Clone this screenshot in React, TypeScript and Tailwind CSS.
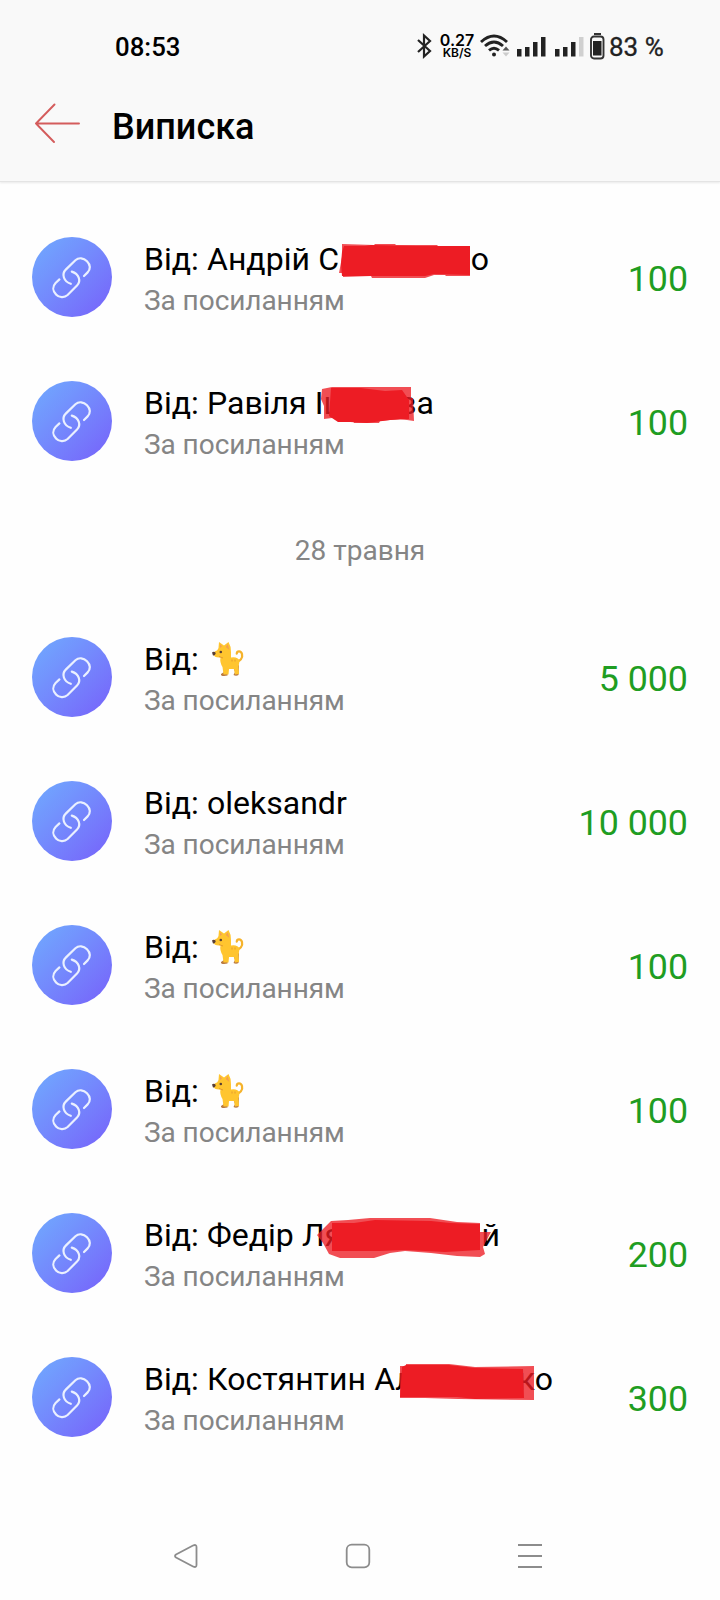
import React from "react";

type Redaction = { tail: string; width: string; edge: string; body: string };
type Entry = { name: string; amount: string; cat?: boolean; redaction?: Redaction };

const earlier: Entry[] = [
  {
    name: "Андрій С",
    amount: "100",
    redaction: {
      tail: "о",
      width: "w-[345px]",
      edge: "M197 4 L229 5 L230 4 L250 4 L251 5 L292 5 L293 6 L325 6 L325 36 L301 36 L300 35 L289 35 L280 38 L227 38 L226 36 L198 37 L198 33 L194 33 L197 17 Z",
      body: "M199 6 L220 6 L226 5 L271 6 L325 6 L325 35 L289 34 L280 36 L197 36 L196 24 L197 12 Z",
    },
  },
  {
    name: "Равіля Іц",
    amount: "100",
    redaction: {
      tail: "ва",
      width: "w-[290px]",
      edge: "M177 5 L187 3 L266 3 L266 14 L268 14 L269 37 L255 35 L235 37 L234 39 L209 39 L208 37 L195 33 L179 35 L179 22 L176 15 Z",
      body: "M186 4 L216 4 L240 7 L257 6 L264 16 L264 35 L245 36 L222 39 L205 38 L193 38 L184 32 Z",
    },
  },
];

const may28: Entry[] = [
  { name: "", amount: "5 000", cat: true },
  { name: "oleksandr", amount: "10 000" },
  { name: "", amount: "100", cat: true },
  { name: "", amount: "100", cat: true },
  {
    name: "Федір Ля",
    amount: "200",
    redaction: {
      tail: "ий",
      width: "w-[356px]",
      edge: "M172 19 L186 5 L203 4 L225 2 L285 2 L312 6 L335 7 L335 16 L346 16 L338 31 L340 38 L335 41 L312 40 L286 37 L260 35 L245 37 L229 42 L195 42 L184 38 L178 27 Z",
      body: "M187 7 L209 7 L230 4 L286 5 L305 7 L335 8 L335 34 L300 36 L260 34 L235 35 L187 35 Z",
    },
  },
  {
    name: "Костянтин Ал",
    amount: "300",
    redaction: {
      tail: "ко",
      width: "w-[409px]",
      edge: "M255 6 L261 6 L261 4 L304 4 L330 7 L389 6 L389 40 L313 39 L280 38 L255 38 Z",
      body: "M257 7 L261 5 L304 5 L330 8 L378 9 L379 38 L330 39 L312 37 L255 37 Z",
    },
  },
];

function LinkBadge() {
  return (
    <div className="mt-8 flex size-20 shrink-0 items-center justify-center rounded-full bg-linear-135 from-[#6fabfe] to-[#765ffa]">
      <svg className="size-20" viewBox="0 0 80 80" fill="none" stroke="#eaf0ff" strokeWidth="2.2" strokeLinecap="round">
        <path d="M38.8 46.8 C31.6 44.4 29.2 37.2 34 32.4 L43.4 23.2 C46.8 20.2 51.6 20.8 55 24.2 C58.6 27.8 58.8 32.2 55.4 35.6 L52 39" />
        <path d="M39.8 34.6 C46.8 36.8 49.5 43.8 45 48.6 L35.6 58 C32.4 61 27.2 60.8 24 57.4 C20.6 54 20.4 49.4 23.6 46 L27.4 42.4" />
      </svg>
    </div>
  );
}

function Cat() {
  return (
    <svg className="ml-1 mt-0.5 h-9 w-[34px]" viewBox="0 0 34 36" fill="none">
      <path d="M25 20 C29 21 32 17 31 13 C30 9.5 26 9.8 25.8 12.5" stroke="#f5b32c" strokeWidth="2.3" strokeLinecap="round" />
      <path d="M13 26 L13 31 L10 33 Q9.5 35 13 35 L16.5 34.5 L17 27 Z M22 26 L24 31 L22.5 34 Q25 35.5 27.5 34 L28 24 Z" fill="#b97940" />
      <path d="M6 9.5 Q7 8 7.5 7 L8 1 L13 4.5 L17.5 1 Q20 5 20 11 L20 16.5 Q27 15.5 28.5 20 L27.5 26 L28 33 L24 33.5 L23 28 L18 28 L17.5 33.5 L12.5 33.5 L11.5 26 Q8.5 21 9.5 16.5 Q3 17 2.5 13 Q3 10 6 9.5 Z" fill="#ffc52f" />
      <path d="M9 3 L11 5.5 L9 7 Z M16.7 3 L18.4 9 L14.8 6 Z" fill="#f3a052" />
      <path d="M1 11.5 Q3 10 4.8 12 Q4 15 2 14.5 Z" fill="#583d36" />
      <circle cx="9.8" cy="11" r="1.3" fill="#583d36" />
      <path d="M8 15.5 L12 17 M21 18.5 L21 20.5 M24 18.5 L24 20.5" stroke="#dd9130" strokeWidth=".8" />
    </svg>
  );
}

function Row({ entry }: { entry: Entry }) {
  const r = entry.redaction;
  return (
    <li className="flex h-36 pl-8 pr-8">
      <LinkBadge />
      <div className="ml-8 flex min-w-0 flex-1 flex-col pt-[34px]">
        <div className="relative flex h-10 whitespace-pre text-[32px] leading-10 text-black [word-spacing:0.3px]">
          {r ? (
            <>
              <div className={`flex shrink-0 justify-between ${r.width}`}>
                <span>Від: {entry.name}</span>
                <span>{r.tail}</span>
              </div>
              <svg className="absolute left-px top-px h-11 w-[420px]" viewBox="0 0 420 44">
                <path d={r.edge} fill="#ed1c24" fillOpacity=".78" />
                <path d={r.body} fill="#ed1c24" />
              </svg>
            </>
          ) : (
            <span>Від: {entry.name}</span>
          )}
          {entry.cat && <Cat />}
        </div>
        <div className="mt-1 h-9 text-[28px] leading-9 tracking-[-0.06px] text-[#858585]">За посиланням</div>
      </div>
      <div className="pt-[53px] text-[35.8px] leading-[42px] text-[#1f9d22]">{entry.amount}</div>
    </li>
  );
}

function StatusBar() {
  return (
    <div className="flex h-[92px] items-center pl-[115px] text-[#222]">
      <span className="w-[301px] pt-0.5 text-[25.8px] font-medium text-black">08:53</span>
      <svg className="h-7 w-4" viewBox="0 0 16 28" fill="none" stroke="currentColor" strokeWidth="2.2">
        <path d="M2 8 L14 19 L8 24.5 V3.5 L14 9 L2 20" />
      </svg>
      <div className="ml-2 flex w-[34px] flex-col items-center text-black">
        <span className="font-[Inter] text-[16px] font-semibold leading-[12px]">0.27</span>
        <span className="font-[Inter] text-[12px] font-semibold leading-[13px]">KB/S</span>
      </div>
      <svg className="ml-1.5 h-7 w-[30px]" viewBox="0 0 30 28" fill="none" stroke="currentColor" strokeWidth="2.9">
        <path d="M1 10 Q14 -2 27 10 M5 14 Q14 6 23 14 M9 18.3 Q14 14 19 18.3" />
        <circle cx="14" cy="22.5" r="2" fill="currentColor" stroke="none" />
        <path d="M22.5 18.5 L26 14.5 L29.5 18.5 Z" fill="#555" stroke="none" />
        <path d="M22.5 20.5 L26 24.5 L29.5 20.5 Z" fill="#ccc" stroke="none" />
      </svg>
      <svg className="ml-[7px] h-7 w-[30px]" viewBox="0 0 30 28" fill="currentColor">
        <path d="M0 17h4.5v7.5H0zM8 15h4.5v9.5H8zM16 10h4.5v14.5H16zM24 5h4.5v19.5H24z" />
      </svg>
      <svg className="ml-2 h-7 w-[30px]" viewBox="0 0 30 28" fill="currentColor">
        <path d="M0 17h4.5v7.5H0zM8 15h4.5v9.5H8zM16 10h4.5v14.5H16z" />
        <path d="M24 5h4.5v19.5H24z" fill="#d0d0d0" />
      </svg>
      <svg className="ml-[5px] h-7 w-[15px]" viewBox="0 0 15 28" fill="none">
        <path d="M4 2H11" stroke="#333" strokeWidth="2" />
        <rect x="1" y="4.5" width="12.5" height="22" rx="3" stroke="#333" strokeWidth="1.9" />
        <rect x="3" y="9" width="8.5" height="14.5" fill="#222" />
      </svg>
      <span className="ml-1 whitespace-pre pt-0.5 text-[26px] [-webkit-text-stroke:0.3px_#222]">83 %</span>
    </div>
  );
}

export default function App() {
  return (
    <div className="flex h-[1600px] w-[720px] flex-col overflow-hidden bg-[#fefefe] font-[Roboto,sans-serif]">
      <header className="h-[182px] shrink-0 border-b border-[#e4e4e4] bg-[#f9f9f9] shadow-[0_1px_2px_#e9e9e9]">
        <StatusBar />
        <div className="flex h-[70px] items-center pl-[34px]">
          <svg className="mb-[13px] h-11 w-12" viewBox="0 0 48 44" fill="none" stroke="#d45c5c" strokeWidth="1.9" strokeLinecap="round" strokeLinejoin="round">
            <path d="M20.5 5.5 L2 24.5 L20 43 M2 24.5 H45" />
          </svg>
          <h1 className="ml-[30px] text-[36px] font-medium leading-10 text-black">Виписка</h1>
        </div>
      </header>
      <main className="flex-1 pt-[23px]">
        <ul>{earlier.map((e, i) => <Row key={i} entry={e} />)}</ul>
        <div className="flex h-28 items-center justify-center pt-1 text-[28px] leading-9 text-[#858585]">28 травня</div>
        <ul>{may28.map((e, i) => <Row key={i} entry={e} />)}</ul>
      </main>
      <nav className="flex h-[88px] shrink-0 items-center justify-between pl-[173px] pr-[178px]">
        <svg className="size-7" viewBox="0 0 28 28" fill="none" stroke="#8c8c8c" strokeWidth="1.8" strokeLinejoin="round">
          <path d="M3 12.5 L20.5 3.3 Q23.5 2.2 23.5 5 V23 Q23.5 25.8 20.5 24.7 L3 15.5 Q1 14 3 12.5 Z" />
        </svg>
        <svg className="-ml-1 size-7" viewBox="0 0 28 28" fill="none" stroke="#8c8c8c" strokeWidth="1.8">
          <rect x="2.7" y="2.7" width="22.6" height="22.6" rx="5" />
        </svg>
        <svg className="h-7 w-6" viewBox="0 0 24 28" stroke="#8c8c8c" strokeWidth="1.9">
          <path d="M0 3H24M0 14H24M0 25H24" />
        </svg>
      </nav>
    </div>
  );
}
